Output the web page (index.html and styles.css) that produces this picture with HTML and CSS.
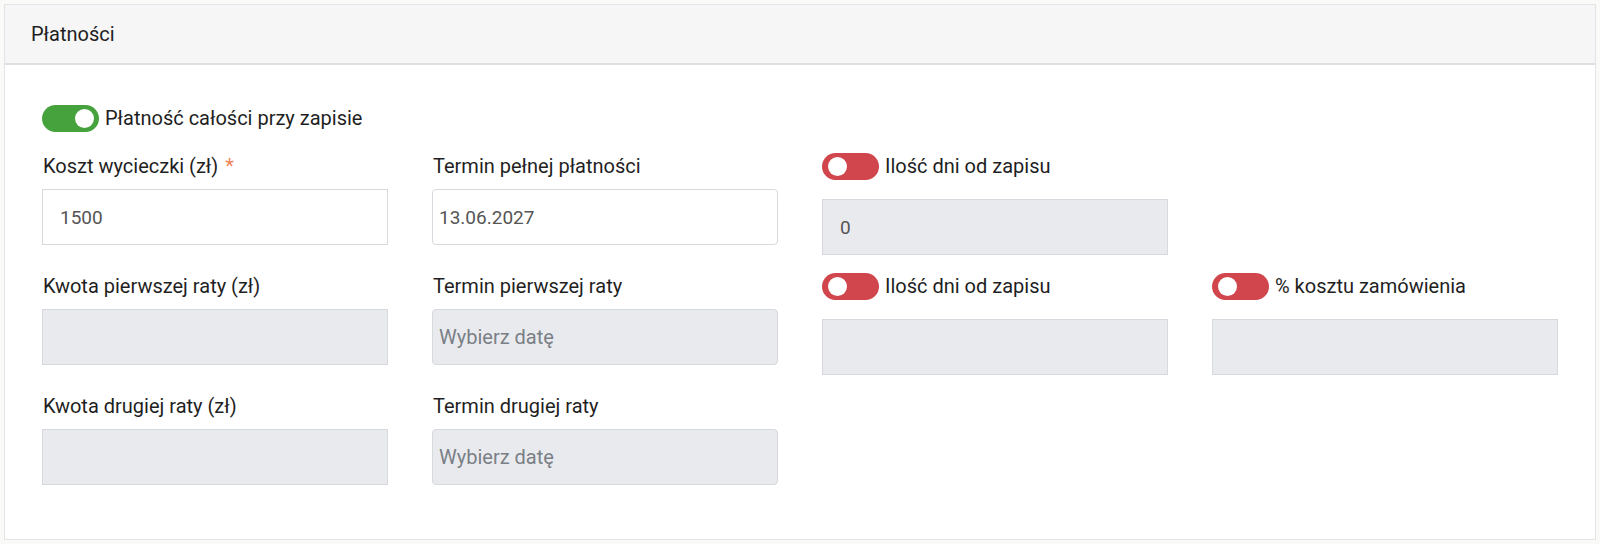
FILE: index.html
```html
<!DOCTYPE html>
<html lang="pl">
<head>
  <meta charset="UTF-8">
  <title>Płatności</title>
  <link rel="stylesheet" href="styles.css">
</head>
<body>
<div class="card">
  <div class="card-header">Płatności</div>
  <div class="card-body">
    <!--płatność całości-->
    <label class="switch-row top-switch">
      <span class="switch on"></span>
      <span>Płatność całości przy zapisie</span>
    </label>

    <div class="form-grid">
      <div class="field">
        <div class="field-label">Koszt wycieczki (zł) <span class="req">*</span></div>
        <div class="input">1500</div>
      </div>
      <div class="field">
        <div class="field-label">Termin pełnej płatności</div>
        <div class="input date">13.06.2027</div>
      </div>
      <div class="field">
        <label class="switch-row">
          <span class="switch off"></span>
          <span>Ilość dni od zapisu</span>
        </label>
        <div class="input disabled">0</div>
      </div>
      <div class="field"></div>

      <div class="field">
        <div class="field-label">Kwota pierwszej raty (zł)</div>
        <div class="input disabled"></div>
      </div>
      <div class="field">
        <div class="field-label">Termin pierwszej raty</div>
        <div class="input date disabled placeholder">Wybierz datę</div>
      </div>
      <div class="field">
        <label class="switch-row">
          <span class="switch off"></span>
          <span>Ilość dni od zapisu</span>
        </label>
        <div class="input disabled"></div>
      </div>
      <div class="field">
        <label class="switch-row">
          <span class="switch off"></span>
          <span>% kosztu zamówienia</span>
        </label>
        <div class="input disabled"></div>
      </div>

      <div class="field">
        <div class="field-label">Kwota drugiej raty (zł)</div>
        <div class="input disabled"></div>
      </div>
      <div class="field">
        <div class="field-label">Termin drugiej raty</div>
        <div class="input date disabled placeholder">Wybierz datę</div>
      </div>
    </div>
  </div>
</div>
</body>
</html>
```

FILE: styles.css
```css
* {
  padding: 0;
  margin: 0;
  box-sizing: border-box;
}

body {
  padding: 4px;
  background: #fafaf8;
  font-family: Roboto, "Liberation Sans", sans-serif;
  font-size: 20px;
  color: #1f1f1f;
}

.card {
  background: #fff;
  border: 1px solid #e4e4e8;
}

.card-header {
  height: 60px;
  line-height: 58px;
  padding-left: 26px;
  background: #f6f6f6;
  border-bottom: 2px solid #dfdfe1;
}

.card-body {
  padding: 40px 37px 54px;
}

/* przełącznik */
.switch-row {
  display: flex;
  align-items: center;
  gap: 6px;
  height: 27px;
  line-height: 27px;
}

.top-switch {
  margin-bottom: 21px;
}

.switch {
  position: relative;
  width: 57px;
  height: 27px;
  border-radius: 14px;
  flex-shrink: 0;
}

.switch::after {
  content: "";
  position: absolute;
  top: 4px;
  width: 19px;
  height: 19px;
  border-radius: 50%;
  background: #fff;
}

.switch.on {
  background: #46a23c;
}

.switch.on::after {
  right: 5px;
}

.switch.off {
  background: #d0464c;
}

.switch.off::after {
  left: 6px;
}

.form-grid {
  display: grid;
  grid-template-columns: repeat(4, 346px);
  column-gap: 44px;
  row-gap: 18px;
  align-items: start;
}

.field-label {
  height: 26px;
  line-height: 26px;
  margin-bottom: 10px;
  padding-left: 1px;
}

.field .switch-row {
  margin-bottom: 19px;
}

.req {
  color: #f0845a;
  margin-left: 2px;
}

.input {
  height: 56px;
  line-height: 55px;
  padding: 0 17px;
  border: 1px solid #d6d9de;
  background: #fff;
  color: #555;
  font-size: 19px;
}

.input.date {
  padding: 0 6px;
  border-radius: 4px;
}

.input.disabled {
  background: #e9eaee;
}

.input.placeholder {
  color: #7a7f86;
  font-size: 20px;
}
```
